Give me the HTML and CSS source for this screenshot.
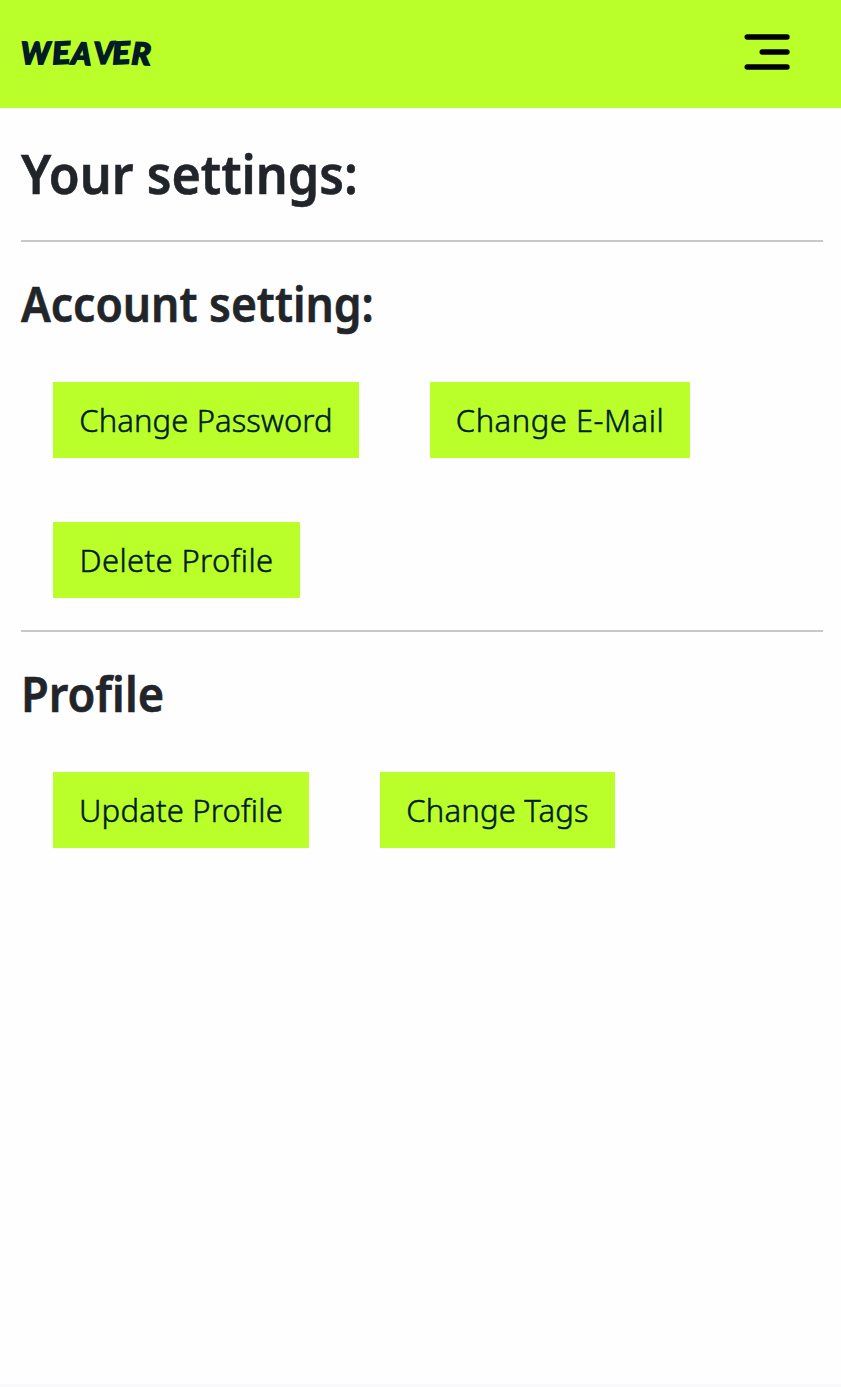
FILE: index.html
```html
<!DOCTYPE html>
<html lang="en">
<head>
<meta charset="utf-8">
<meta name="viewport" content="width=device-width, initial-scale=1">
<title>Weaver</title>
<link rel="stylesheet" href="styles.css">
</head>
<body>
<header class="navbar">
  <a class="brand"><span class="w">W</span><span class="e">E</span><span class="a">A</span><span class="v">V</span><span class="e">E</span><span class="r">R</span></a>
  <svg class="menu" width="48" height="40" viewBox="0 0 48 40" fill="none" stroke="#000" stroke-width="5.4" stroke-linecap="round">
    <path d="M4.2 5H44M19.2 20H44M4.2 35H44"/>
  </svg>
</header>
<main class="content">
  <h1 class="title"><span class="fit-title">Your settings:</span></h1>
  <hr class="rule">
  <h2 class="subtitle"><span class="fit-account">Account setting:</span></h2>
  <div class="actions">
    <button class="btn password">Change Password</button>
    <button class="btn email">Change E-Mail</button>
    <button class="btn delete">Delete Profile</button>
  </div>
  <hr class="rule">
  <h2 class="subtitle"><span class="fit-profile">Profile</span></h2>
  <div class="actions">
    <button class="btn update">Update Profile</button>
    <button class="btn tags">Change Tags</button>
  </div>
</main>
<footer class="footer"></footer>
</body>
</html>
```
FILE: styles.css
```css
* { box-sizing: border-box; }
body {
  margin: 0;
  min-height: 1387px;
  display: flex;
  flex-direction: column;
  background: #fefefe;
  color: #212529;
  font-family: "Noto Sans", sans-serif;
}
.navbar {
  height: 108px;
  padding: 0 50px 4px 21px;
  display: flex;
  align-items: center;
  justify-content: space-between;
  background: #baff29;
}
.brand {
  display: flex;
  padding-bottom: 1px;
  color: #001c24;
  font: italic 700 30px/38px Lato, sans-serif;
  -webkit-text-stroke: 2px #001c24;
  stroke-linejoin: round;
}
.brand span { display: block; transform-origin: 0 50%; }
.w { width: 31px; }
.brand .e { width: 20px; transform: scaleX(1.1) rotate(-3deg); }
.brand .a { width: 22px; transform: rotate(3deg); }
.brand .v { width: 18px; transform: rotate(-2deg); }
.brand .r { transform: scaleX(1.05) rotate(3deg); }
.content { flex: 1; padding: 0 18px 0 21px; }
.title, .subtitle {
  margin: 0;
  font-weight: 650;
  white-space: nowrap;
  -webkit-text-stroke: 0.6px #212529;
}
.title { height: 132px; font-size: 55px; line-height: 130px; }
.subtitle { height: 124px; font-size: 49px; line-height: 122px; }
.title span, .subtitle span { display: inline-block; transform-origin: 0 50%; }
.fit-title { transform: scaleX(0.913); }
.fit-account { transform: scaleX(0.906); }
.fit-profile { transform: scaleX(0.922); }
.rule { margin: 0; border: 0; height: 2px; background: #c7c8c9; }
.actions {
  display: flex;
  flex-wrap: wrap;
  gap: 64px 71px;
  padding: 16px 32px 32px;
}
.btn {
  height: 76px;
  padding: 0;
  border: 0;
  background: #baff29;
  color: #001c24;
  font: 350 31px/76px "Noto Sans", sans-serif;
  -webkit-text-stroke: 0.5px #001c24;
  white-space: nowrap;
}
.password { width: 306px; letter-spacing: 0.1px; }
.email { width: 260px; letter-spacing: 0.5px; }
.delete { width: 247px; letter-spacing: 0.4px; }
.update { width: 256px; letter-spacing: 0.2px; }
.tags { width: 235px; letter-spacing: 0.2px; }
.footer { height: 3px; background: #f8f8fd; }
```
